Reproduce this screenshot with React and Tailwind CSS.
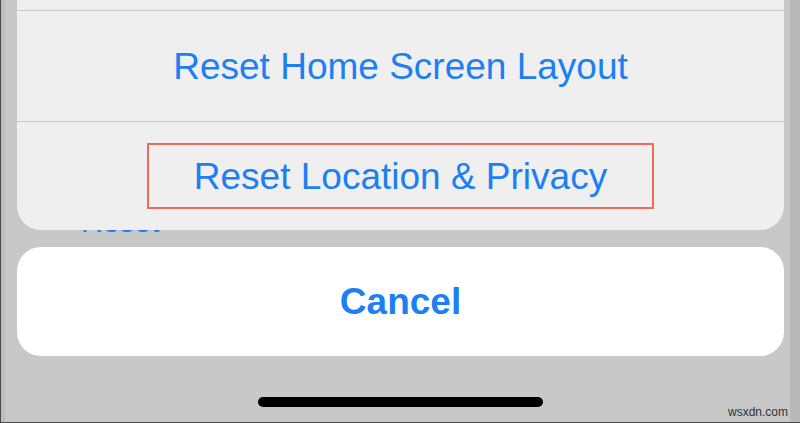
export default function App() {
  return (
    <div
      className="relative w-[800px] h-[423px] overflow-hidden bg-[#c8c8c8] border-l border-b border-[#4a4a4a] flex flex-col"
      style={{ fontFamily: '"Liberation Sans", Arial, sans-serif' }}
    >
      {/* page behind the sheet */}
      <div className="absolute left-0 top-0 bottom-0 w-[4px] bg-[#bdbdbd]" />
      <div className="absolute right-0 top-0 bottom-0 w-[10px] bg-[#b9b9b9]" />
      <div className="absolute left-[80px] top-[207px] text-[30px] leading-none text-[#1c7ff2]">Reset</div>

      {/* action sheet */}
      <div className="relative mx-[16px] h-[230px] bg-[#efefef] rounded-b-[24px] flex flex-col">
        <div className="h-[10px]" />
        <div className="h-[111px] border-t border-[#c9c9c9] flex items-center justify-center">
          <span className="text-[37px] leading-none text-[#1c7ff2]">Reset Home Screen Layout</span>
        </div>
        <div className="flex-1 border-t border-[#c9c9c9] flex items-center justify-center">
          <div className="w-[507px] h-[66px] border-2 border-[#f2695a] flex items-center justify-center">
            <span className="text-[37px] leading-none text-[#1c7ff2]">Reset Location &amp; Privacy</span>
          </div>
        </div>
      </div>

      <div className="relative mx-[16px] mt-[17px] h-[109px] bg-white rounded-[24px] flex items-center justify-center">
        <span className="text-[37px] leading-none font-bold text-[#1c7ff2]">Cancel</span>
      </div>

      <div className="mt-[41px] flex justify-center">
        <div className="w-[285px] h-[10px] rounded-full bg-black" />
      </div>

      <div className="absolute right-[12px] bottom-[4px] text-[12px] leading-none text-[#333333]">wsxdn.com</div>
    </div>
  )
}
